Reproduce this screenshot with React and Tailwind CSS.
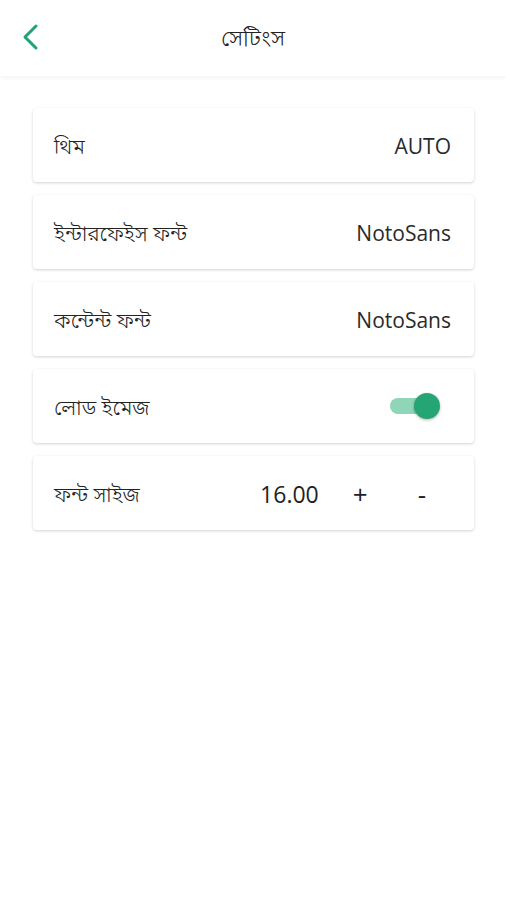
import React, { useState } from 'react';

const BN = { fontFamily: '"Noto Sans Bengali", "Noto Sans", "Open Sans", sans-serif' };
const LAT = { fontFamily: '"Open Sans", "Noto Sans", sans-serif' };

const Card = ({ label, children }) => (
    <div className="h-[74px] bg-white rounded-[4px] shadow-[0_1px_3px_rgba(0,0,0,0.18)] flex items-center justify-between pl-[21px] pr-[23px]">
        <span className="text-[21px] font-light text-[#222] pt-[10px]" style={BN}>{label}</span>
        {children}
    </div>
);

const App = () => {
    const [loadImage, setLoadImage] = useState(true);
    const [size, setSize] = useState(16);

    return (
        <div className="w-[506px] h-[900px] bg-white overflow-hidden">
            {/* Header */}
            <div className="h-[76px] flex items-center px-[20px] shadow-[0_2px_4px_rgba(0,0,0,0.05)]">
                <svg width="22" height="30" viewBox="0 0 22 30" className="shrink-0">
                    <path d="M16 3 L5 14 L16 25" fill="none" stroke="#22a274" strokeWidth="3" strokeLinecap="round" strokeLinejoin="round" />
                </svg>
                <h1 className="flex-1 text-center text-[23px] font-light text-[#222] pr-[22px] pt-[4px]" style={BN}>সেটিংস</h1>
            </div>

            {/* Content */}
            <div className="pl-[33px] pr-[32px] pt-[32px] flex flex-col gap-[13px]">
                <Card label="থিম">
                    <span className="text-[21px] text-[#2a2a2a] pt-[3px]" style={LAT}>AUTO</span>
                </Card>
                <Card label="ইন্টারফেইস ফন্ট">
                    <span className="text-[21px] text-[#2a2a2a] pt-[3px]" style={LAT}>NotoSans</span>
                </Card>
                <Card label="কন্টেন্ট ফন্ট">
                    <span className="text-[21px] text-[#2a2a2a] pt-[3px]" style={LAT}>NotoSans</span>
                </Card>
                <Card label="লোড ইমেজ">
                    <button
                        onClick={() => setLoadImage(!loadImage)}
                        className="relative w-[50px] h-[28px] mr-[13px] flex items-center"
                    >
                        <span className={`absolute left-[2px] w-[46px] h-[16px] rounded-full ${loadImage ? 'bg-[#8fd5b8]' : 'bg-[#c8c8c8]'}`} />
                        <span className={`absolute w-[26px] h-[26px] rounded-full shadow-[0_1px_3px_rgba(0,0,0,0.3)] ${loadImage ? 'right-[-2px] bg-[#26a574]' : 'left-0 bg-[#f5f5f5]'}`} />
                    </button>
                </Card>
                <Card label="ফন্ট সাইজ">
                    <div className="flex items-center text-[#222] pt-[2px]" style={LAT}>
                        <span className="text-[23px]">{size.toFixed(2)}</span>
                        <button onClick={() => setSize(size + 1)} className="text-[26px] ml-[34px] leading-none">+</button>
                        <button onClick={() => setSize(size - 1)} className="text-[26px] ml-[50px] mr-[25px] leading-none">-</button>
                    </div>
                </Card>
            </div>
        </div>
    );
};

export default App;
